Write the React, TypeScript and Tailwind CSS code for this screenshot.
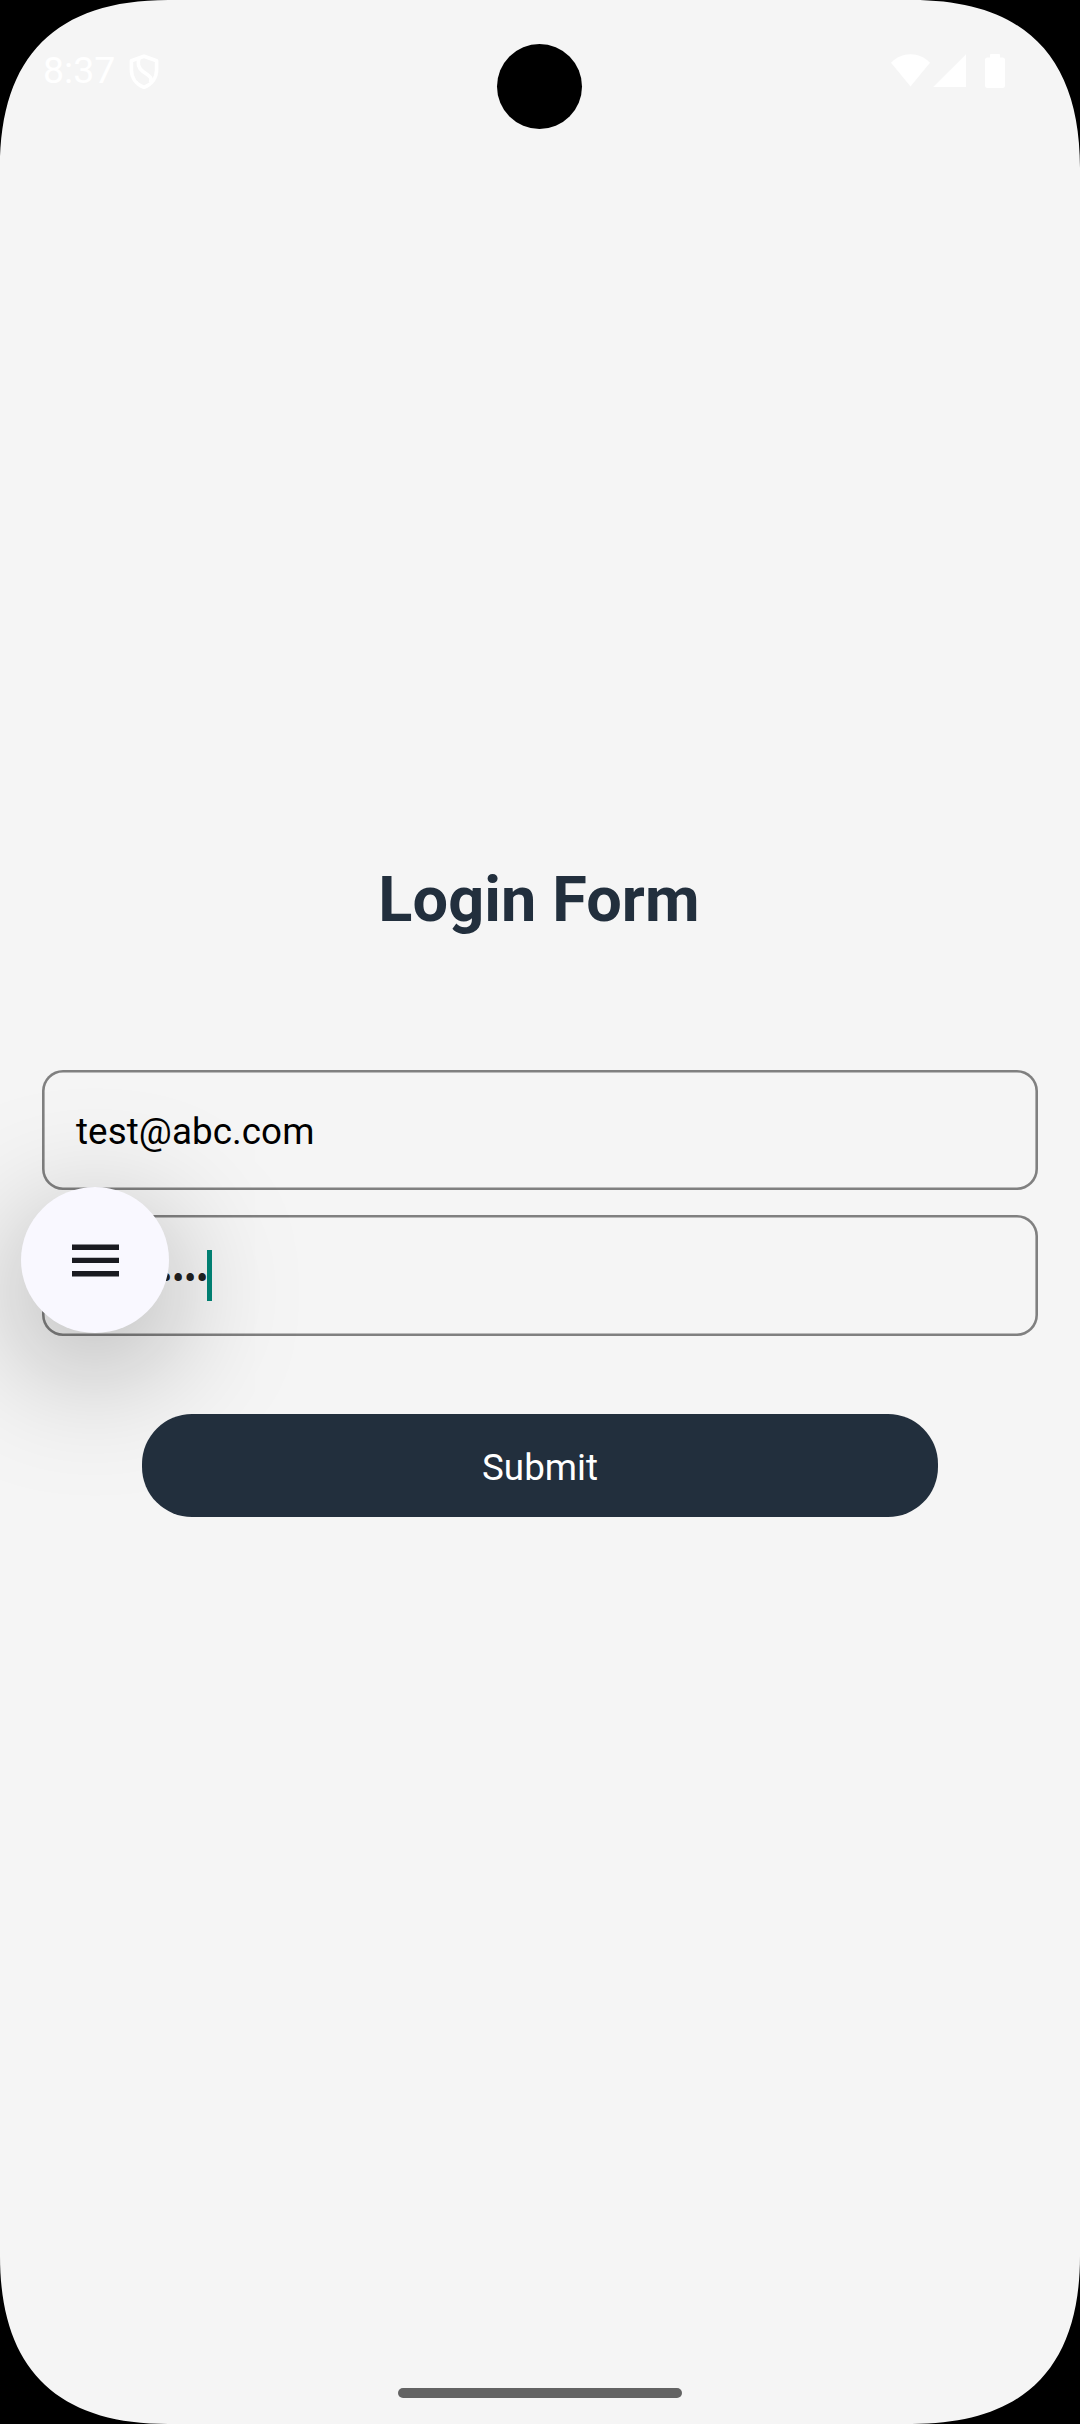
import React from "react";

function Corner({ className }: { className: string }) {
  return (
    <svg className={`absolute size-[168px] ${className}`} viewBox="0 0 168 168" aria-hidden="true">
      <path d="M0 0H168C56 0 0 56 0 168Z" fill="#000" />
    </svg>
  );
}

function StatusBar() {
  return (
    <header className="flex h-[142px] shrink-0 items-start justify-between pl-[43px] pr-[75px] pt-[47px] text-white">
      <div className="flex">
        <span className="w-[84px] whitespace-nowrap text-[37.5px] leading-[47px]">8:37</span>
        <svg className="ml-[2px] mt-[7px] h-[36px] w-[30px]" viewBox="0 0 30 36" fill="none" stroke="#fff" strokeWidth="3.6" strokeLinejoin="round">
          <path d="M15 2.2L27.6 6.8V16C27.6 24 22.5 30.5 15 33.4C7.500 30.500 2.400 24 2.400 16V6.800Z" />
          <path d="M10 4C8.500 10 9 13.500 14 17.500C20 21.800 23.500 23 21.500 28.500" />
        </svg>
      </div>
      <div className="flex pt-[7px]">
        <svg className="h-[34px] w-[114px]" viewBox="0 0 114 34" fill="#fff">
          <path d="M0 8.800C5.500 3 12 0.200 19.500 0.200S33.500 3 39 8.800L19.500 32.500Z" />
          <path d="M75 0.200V33H42.200Z" />
          <path d="M100 0h8q1 0 1 1v2.500h2.500q2.500 0 2.500 2.500v25.500q0 2.500-2.500 2.500h-15q-2.500 0-2.500-2.500v-25.500q0-2.500 2.500-2.500h2.500v-2.500q0-1 1-1Z" />
        </svg>
      </div>
    </header>
  );
}

export default function App() {
  return (
    <div className="relative flex h-[2424px] w-[1080px] flex-col overflow-hidden bg-[#f5f5f5] font-['Roboto',sans-serif]">
      <StatusBar />
      <main className="flex flex-1 flex-col px-[42px] pt-[721px]">
        <h1 className="pr-[2px] text-center text-[63px] font-bold leading-[74px] tracking-[0.1px] text-[#222f3d]">Login Form</h1>
        <div className="mt-[133px] flex h-[120px] shrink-0 items-center rounded-[21px] px-[34px] text-[36.75px] text-black shadow-[inset_0_0_0_2.6px_#808080]">
          <span className="relative top-[2px] tracking-[0.08px]">test@abc.com</span>
        </div>
        <div className="mt-[25px] flex h-[121px] shrink-0 items-center rounded-[21px] px-[34px] text-[36.75px] text-[#212121] shadow-[inset_0_0_0_2.6px_#808080]">
          <span className="relative top-[3px] w-[131px] whitespace-nowrap tracking-[-0.4px]">•••••••••••</span>
          <span className="h-[51px] w-[5px] bg-[#008577]" />
        </div>
        <button className="z-10 mx-[100px] mt-[78px] h-[103px] shrink-0 rounded-[50px] bg-[#222f3d] text-[36.75px] text-white">
          <span className="relative top-[2px]">Submit</span>
        </button>
      </main>
      <div className="mx-auto mb-[26px] h-[10px] w-[284px] shrink-0 rounded-full bg-[#636363]" />

      <button
        aria-label="Menu"
        className="absolute left-[21px] top-[1187px] flex h-[146px] w-[148px] flex-col items-center justify-center rounded-[50%] bg-[#f9f8ff] shadow-[0_32px_130px_rgba(0,0,0,0.34)]"
      >
        <svg className="h-[33px] w-[47px]" viewBox="0 0 47 33" fill="#1a1b21">
          <path d="M0 .6h47v5.400H0zM0 13.700h47v5.400H0zM0 27h47v5.400H0z" />
        </svg>
      </button>
      <div className="absolute left-[497px] top-[44px] size-[85px] rounded-full bg-black" />
      <Corner className="left-0 top-0" />
      <Corner className="right-0 top-0 -scale-x-100" />
      <Corner className="bottom-0 left-0 -scale-y-100" />
      <Corner className="bottom-0 right-0 rotate-180" />
    </div>
  );
}
